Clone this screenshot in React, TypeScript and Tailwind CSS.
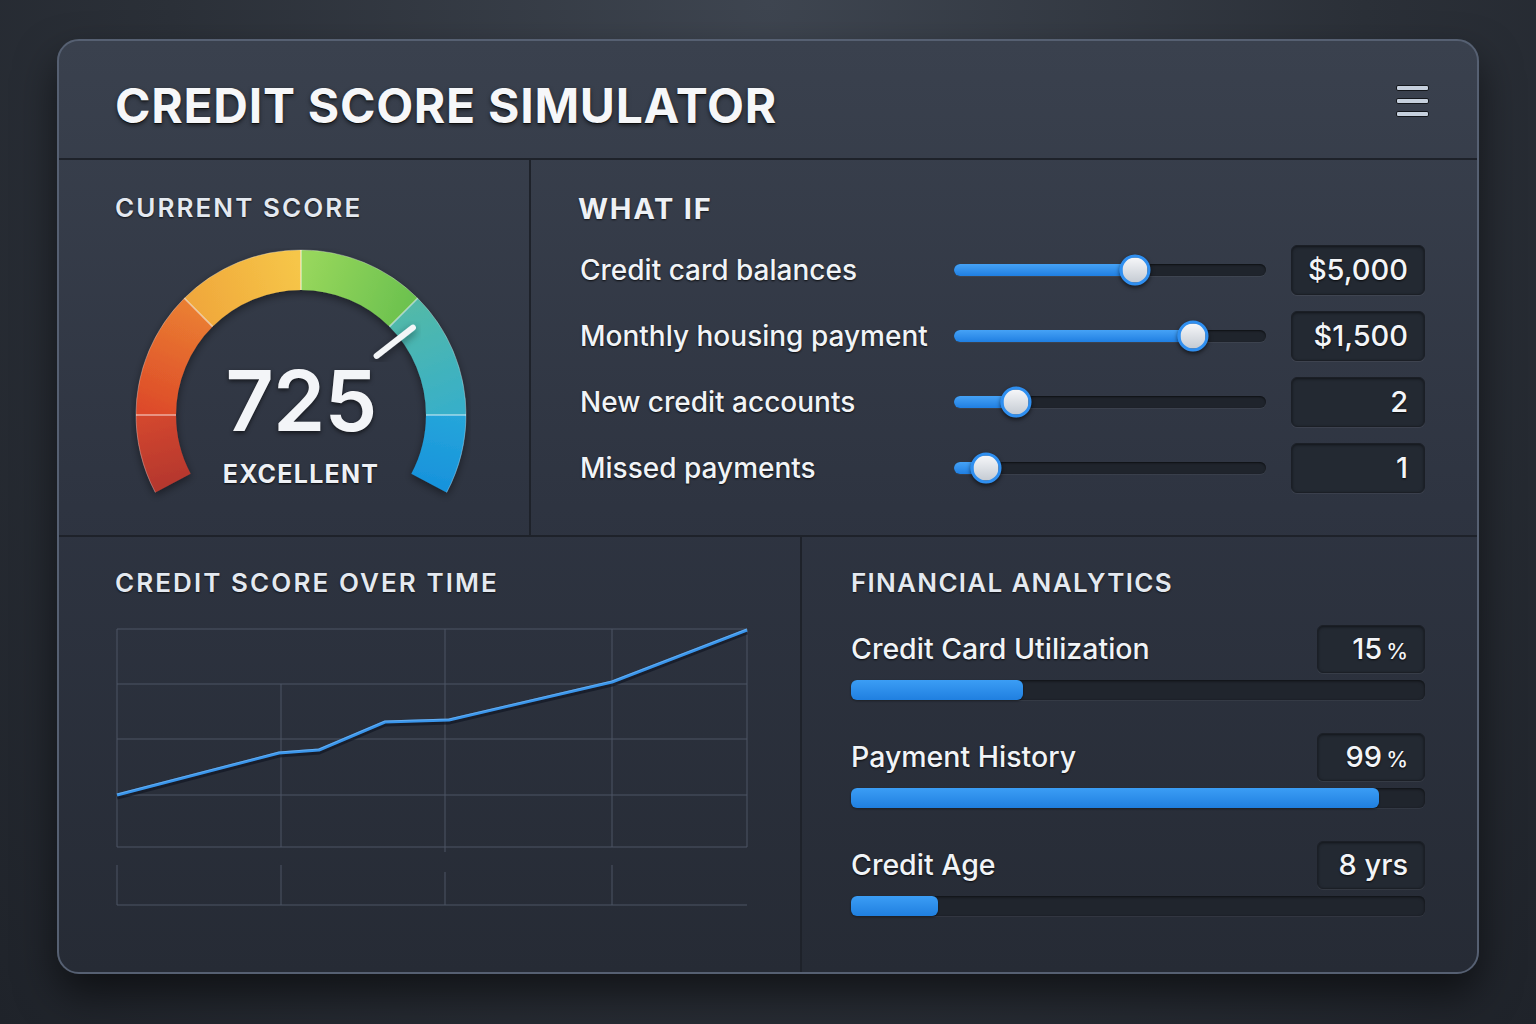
import React from "react";

const sliders = [
  { label: "Credit card balances", value: "$5,000", pct: 58 },
  { label: "Monthly housing payment", value: "$1,500", pct: 76.6 },
  { label: "New credit accounts", value: "2", pct: 19.9 },
  { label: "Missed payments", value: "1", pct: 10.3 },
];

const analytics = [
  { label: "Credit Card Utilization", num: "15", unit: "%", pct: 30 },
  { label: "Payment History", num: "99", unit: "%", pct: 92 },
  { label: "Credit Age", num: "8 yrs", unit: "", pct: 15.2 },
];

const CX = 170;
const CY = 167;
const RO = 165;
const RI = 125;

function pt(r: number, deg: number) {
  const t = (deg * Math.PI) / 180;
  return [CX + r * Math.sin(t), CY - r * Math.cos(t)];
}

function segPath(a: number, b: number) {
  const [x1, y1] = pt(RO, a);
  const [x2, y2] = pt(RO, b);
  const [x3, y3] = pt(RI, b);
  const [x4, y4] = pt(RI, a);
  return `M${x1} ${y1} A${RO} ${RO} 0 0 1 ${x2} ${y2} L${x3} ${y3} A${RI} ${RI} 0 0 0 ${x4} ${y4} Z`;
}

const segments = [
  { a: -118, b: -90, c1: "#b5372e", c2: "#d3472f" },
  { a: -90, b: -45, c1: "#dd4a2a", c2: "#ea7d31" },
  { a: -45, b: 0, c1: "#f0a83c", c2: "#f6c648" },
  { a: 0, b: 45, c1: "#98d75c", c2: "#6dc24f" },
  { a: 45, b: 90, c1: "#52b9a9", c2: "#37afc9" },
  { a: 90, b: 118, c1: "#25a5da", c2: "#1893dc" },
];

function Gauge() {
  const [n1, n2] = [pt(96, 52), pt(142, 52)];
  return (
    <div className="relative w-[340px] h-[260px]">
      <svg width="340" height="260" viewBox="0 0 340 260">
        <defs>
          {segments.map((s, i) => {
            const m = (RO + RI) / 2;
            const [x1, y1] = pt(m, s.a);
            const [x2, y2] = pt(m, s.b);
            return (
              <linearGradient key={i} id={`g${i}`} gradientUnits="userSpaceOnUse" x1={x1} y1={y1} x2={x2} y2={y2}>
                <stop offset="0" stopColor={s.c1} />
                <stop offset="1" stopColor={s.c2} />
              </linearGradient>
            );
          })}
          <filter id="gs" x="-20%" y="-20%" width="140%" height="140%">
            <feDropShadow dx="0" dy="3" stdDeviation="4" floodColor="#000" floodOpacity="0.45" />
          </filter>
        </defs>
        <g filter="url(#gs)">
          {segments.map((s, i) => (
            <path key={i} d={segPath(s.a, s.b)} fill={`url(#g${i})`} />
          ))}
        </g>
        {[-90, -45, 0, 45, 90].map((d) => {
          const [x1, y1] = pt(RI, d);
          const [x2, y2] = pt(RO, d);
          return <line key={d} x1={x1} y1={y1} x2={x2} y2={y2} stroke="#ffffff" strokeOpacity="0.55" strokeWidth="1.5" />;
        })}
        <path
          d={`M${pt(RO, -118).join(" ")} A${RO} ${RO} 0 1 1 ${pt(RO, 118).join(" ")}`}
          fill="none"
          stroke="#ffffff"
          strokeOpacity="0.3"
          strokeWidth="1"
        />
        <line x1={n1[0]} y1={n1[1]} x2={n2[0]} y2={n2[1]} stroke="#f4f6f8" strokeWidth="6" strokeLinecap="round" filter="url(#gs)" />
      </svg>
      <div className="absolute left-0 right-0 top-[111px] text-center text-[84px] leading-none font-semibold text-[#f3f5f8] tracking-[-0.01em] [text-shadow:0_2px_4px_rgba(0,0,0,0.6)]">
        725
      </div>
      <div className="absolute left-0 right-0 top-[214px] text-center text-[25px] leading-none font-bold text-[#eef1f5] tracking-[0.05em] [text-shadow:0_1px_2px_rgba(0,0,0,0.8)]">
        EXCELLENT
      </div>
    </div>
  );
}

function Slider({ pct }: { pct: number }) {
  return (
    <div className="relative w-[312px] h-[12px] rounded-full bg-[#1f242c] shadow-[inset_0_1px_2px_rgba(0,0,0,0.6),0_1px_0_rgba(255,255,255,0.05)]">
      <div
        className="absolute left-0 top-0 h-full rounded-full bg-gradient-to-b from-[#45a2f6] to-[#1f7fe2]"
        style={{ width: `${pct}%` }}
      />
      <div
        className="absolute top-1/2 w-[31px] h-[31px] -translate-x-1/2 -translate-y-1/2 rounded-full border-[3px] border-[#2f8ff0] bg-gradient-to-b from-[#f6f7f9] to-[#c5cbd3] shadow-[0_2px_4px_rgba(0,0,0,0.6)]"
        style={{ left: `${pct}%` }}
      />
    </div>
  );
}

const valueBox =
  "rounded-[6px] bg-[#232932] border border-[#1b1f26] shadow-[inset_0_1px_3px_rgba(0,0,0,0.5),0_1px_0_rgba(255,255,255,0.06)] flex items-center justify-end";

const heading =
  "text-[26px] leading-none font-semibold tracking-[0.08em] text-[#e4e9f0] [text-shadow:0_1px_2px_rgba(0,0,0,0.7)]";

function Chart() {
  const pts = "1,167 163,125 203,122 269,94 333,92 496,54 631,2";
  const hs = [1, 56, 111, 167, 219];
  const grid = "#4c5464";
  return (
    <svg width="633" height="280" viewBox="0 0 633 280">
      {hs.map((y) => (
        <line key={y} x1="1" y1={y} x2="631" y2={y} stroke={grid} strokeWidth="1" />
      ))}
      <line x1="1" y1="277" x2="631" y2="277" stroke={grid} strokeWidth="1" />
      <line x1="1" y1="1" x2="1" y2="219" stroke={grid} />
      <line x1="165" y1="56" x2="165" y2="219" stroke={grid} />
      <line x1="329" y1="1" x2="329" y2="224" stroke={grid} />
      <line x1="496" y1="1" x2="496" y2="219" stroke={grid} />
      <line x1="631" y1="1" x2="631" y2="219" stroke={grid} />
      <line x1="1" y1="237" x2="1" y2="277" stroke={grid} />
      <line x1="165" y1="237" x2="165" y2="277" stroke={grid} />
      <line x1="329" y1="244" x2="329" y2="277" stroke={grid} />
      <line x1="496" y1="237" x2="496" y2="277" stroke={grid} />
      <polyline points={pts} fill="none" stroke="#0d1220" strokeOpacity="0.6" strokeWidth="5" transform="translate(0 2)" />
      <polyline points={pts} fill="none" stroke="#3a96ec" strokeWidth="3" strokeLinejoin="round" />
      <polyline points={pts} fill="none" stroke="#8cc4f7" strokeOpacity="0.5" strokeWidth="1" strokeLinejoin="round" transform="translate(0 -1)" />
    </svg>
  );
}

export default function App() {
  return (
    <div className="w-full h-[1024px] bg-[radial-gradient(ellipse_at_top,#3e4550_0%,#2b3038_55%,#1f232a_100%)] pt-[39px] pl-[57px] font-['Inter','Liberation_Sans',sans-serif]">
      <div className="w-[1422px] h-[935px] rounded-[22px] border-2 border-[#566072] bg-gradient-to-b from-[#3a414e] via-[#2e3441] to-[#262b35] shadow-[0_20px_40px_rgba(0,0,0,0.55)] flex flex-col overflow-hidden">
        <header className="h-[119px] shrink-0 flex items-center justify-between pl-[56px] pr-[48px] pt-[12px] border-b-2 border-[#1e222a]">
          <h1 className="text-[48px] leading-none font-bold tracking-[0.015em] text-[#f6f7f9] [text-shadow:0_1px_0_#111,0_2px_4px_rgba(0,0,0,0.6)]">
            CREDIT SCORE SIMULATOR
          </h1>
          <div className="flex flex-col gap-[7px] -mt-[10px]">
            <span className="block w-[33px] h-[6px] rounded-[2px] bg-[#c6d0dd] border border-[#14171c]" />
            <span className="block w-[33px] h-[6px] rounded-[2px] bg-[#c6d0dd] border border-[#14171c]" />
            <span className="block w-[33px] h-[6px] rounded-[2px] bg-[#c6d0dd] border border-[#14171c]" />
          </div>
        </header>

        <div className="h-[377px] shrink-0 flex border-b-2 border-[#1e222a]">
          <section className="w-[472px] shrink-0 border-r-2 border-[#1e222a] pl-[56px] pt-[35px]">
            <h2 className={heading}>CURRENT SCORE</h2>
            <div className="mt-[27px] ml-[16px]">
              <Gauge />
            </div>
          </section>
          <section className="flex-1 pl-[47px] pr-[52px] pt-[34px]">
            <h2 className="text-[29px] leading-none font-bold tracking-[0.06em] text-[#eef1f5] [text-shadow:0_1px_2px_rgba(0,0,0,0.7)]">
              WHAT IF
            </h2>
            <div className="mt-[22px] flex flex-col gap-[16px]">
              {sliders.map((s) => (
                <div key={s.label} className="h-[50px] flex items-center">
                  <span className="w-[376px] pl-[2px] text-[28px] font-medium text-[#f1f4f7] [text-shadow:0_1px_2px_rgba(0,0,0,0.8)]">
                    {s.label}
                  </span>
                  <Slider pct={s.pct} />
                  <div className={`${valueBox} ml-auto w-[134px] h-[50px] pr-[16px]`}>
                    <span className="text-[29px] font-medium text-[#f3f5f8] [text-shadow:0_1px_2px_rgba(0,0,0,0.8)]">{s.value}</span>
                  </div>
                </div>
              ))}
            </div>
          </section>
        </div>

        <div className="flex-1 flex">
          <section className="w-[743px] shrink-0 border-r-2 border-[#1e222a] pl-[56px] pt-[33px]">
            <h2 className={heading}>CREDIT SCORE OVER TIME</h2>
            <div className="mt-[32px] ml-[1px]">
              <Chart />
            </div>
          </section>
          <section className="flex-1 pl-[49px] pr-[52px] pt-[33px]">
            <h2 className="text-[26px] leading-none font-semibold tracking-[0.05em] text-[#e4e9f0] [text-shadow:0_1px_2px_rgba(0,0,0,0.7)]">
              FINANCIAL ANALYTICS
            </h2>
            <div className="mt-[29px] flex flex-col gap-[33px]">
              {analytics.map((a) => (
                <div key={a.label} className="flex flex-col">
                  <div className="flex items-center justify-between">
                    <span className="text-[28.5px] font-medium text-[#f1f4f7] [text-shadow:0_1px_2px_rgba(0,0,0,0.8)]">
                      {a.label}
                    </span>
                    <div className={`${valueBox} w-[108px] h-[48px] pr-[16px]`}>
                      <span className="text-[29px] font-medium text-[#f3f5f8] [text-shadow:0_1px_2px_rgba(0,0,0,0.8)]">
                        {a.num}
                        {a.unit && <span className="ml-[4px] text-[22px]">{a.unit}</span>}
                      </span>
                    </div>
                  </div>
                  <div className="mt-[7px] h-[20px] rounded-[6px] bg-[#20252d] shadow-[inset_0_1px_3px_rgba(0,0,0,0.6),0_1px_0_rgba(255,255,255,0.05)]">
                    <div
                      className="h-full rounded-[6px] bg-gradient-to-b from-[#3b9df5] to-[#1f7fe0] shadow-[0_1px_2px_rgba(0,0,0,0.5)]"
                      style={{ width: `${a.pct}%` }}
                    />
                  </div>
                </div>
              ))}
            </div>
          </section>
        </div>
      </div>
    </div>
  );
}
